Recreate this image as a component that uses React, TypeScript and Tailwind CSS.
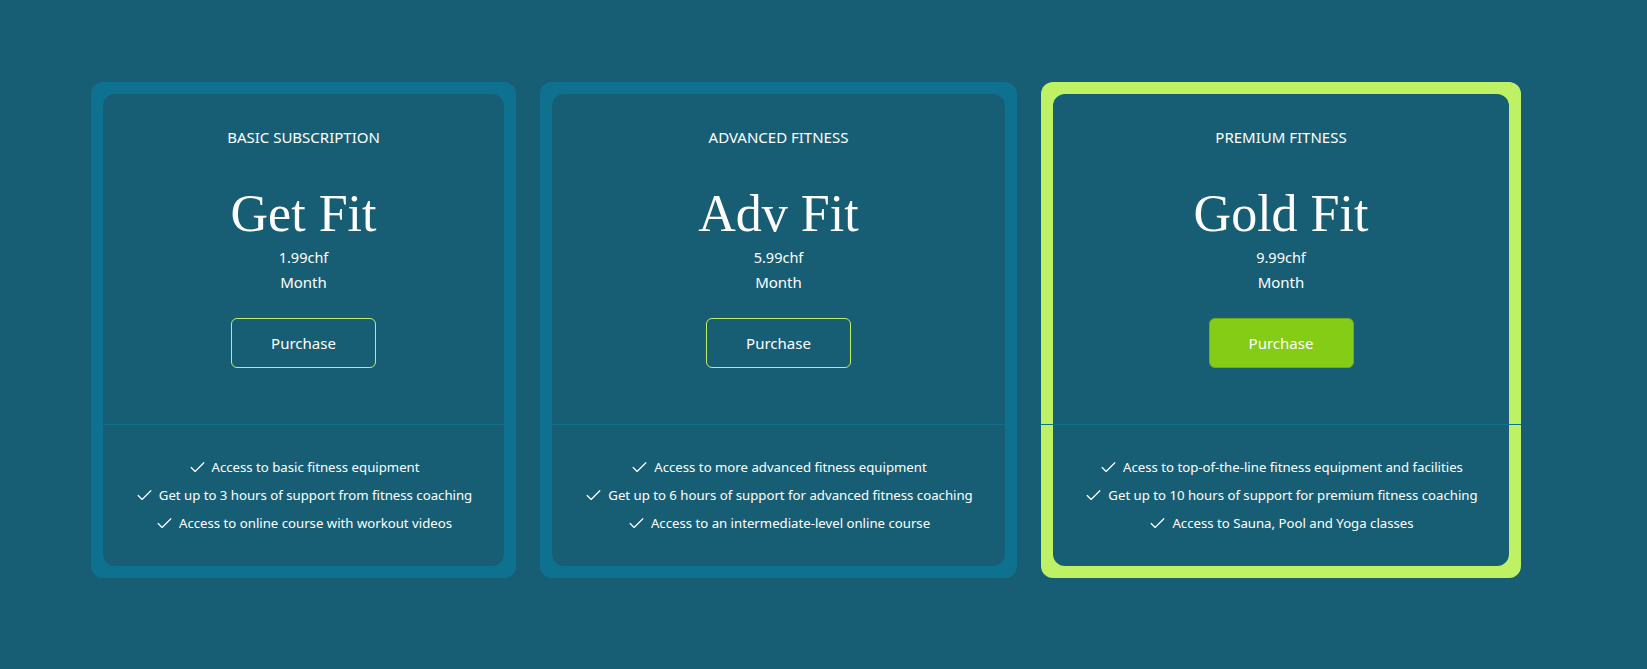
import React from 'react'
import { Check } from 'lucide-react'

type Plan = {
  tag: string
  name: string
  price: string
  features: string[]
  width: string
  featured?: boolean
}

const plans: Plan[] = [
  {
    tag: 'BASIC SUBSCRIPTION',
    name: 'Get Fit',
    price: '1.99chf',
    width: 'w-[425px]',
    features: [
      'Access to basic fitness equipment',
      'Get up to 3 hours of support from fitness coaching',
      'Access to online course with workout videos',
    ],
  },
  {
    tag: 'ADVANCED FITNESS',
    name: 'Adv Fit',
    price: '5.99chf',
    width: 'w-[477px]',
    features: [
      'Access to more advanced fitness equipment',
      'Get up to 6 hours of support for advanced fitness coaching',
      'Access to an intermediate-level online course',
    ],
  },
  {
    tag: 'PREMIUM FITNESS',
    name: 'Gold Fit',
    price: '9.99chf',
    width: 'w-[480px]',
    featured: true,
    features: [
      'Acess to top-of-the-line fitness equipment and facilities',
      'Get up to 10 hours of support for premium fitness coaching',
      'Access to Sauna, Pool and Yoga classes',
    ],
  },
]

function PlanCard({ plan }: { plan: Plan }) {
  const outer = plan.featured ? 'bg-[#bef264]' : 'bg-[#0e7190]'
  return (
    <div className={`${plan.width} ${outer} flex flex-col rounded-[12px] p-[12px]`}>
      <div className="flex flex-1 flex-col rounded-[12px] bg-[#175e75]">
        <div className="flex flex-col items-center pt-[33px] pb-[56px]">
          <div className="text-[15px] leading-[20px]">{plan.tag}</div>
          <h2 className="mt-[41px] font-['Liberation_Serif',serif] text-[52px] leading-[52px]">{plan.name}</h2>
          <div className="mt-[5px] text-[14.5px] leading-[25px]">{plan.price}</div>
          <div className="text-[15px] leading-[25px]">Month</div>
          {plan.featured ? (
            <button className="mt-[23px] h-[50px] w-[145px] rounded-[6px] border border-[#6fae12] bg-[#84cc16] text-[15px]">
              Purchase
            </button>
          ) : (
            <button className="mt-[23px] h-[50px] w-[145px] rounded-[6px] border border-[#bef264] text-[15px]">
              Purchase
            </button>
          )}
        </div>
        <div className="-mx-[12px] h-px bg-[#0e7190]" />
        <ul className="flex flex-col items-center pt-[28px] pb-[29px] text-[13.2px] leading-[28px]">
          {plan.features.map((f) => (
            <li key={f} className="flex items-center gap-[5px]">
              <Check size={19} strokeWidth={1.5} />
              <span>{f}</span>
            </li>
          ))}
        </ul>
      </div>
    </div>
  )
}

export default function App() {
  return (
    <div className="min-h-screen bg-[#175e75] font-['Noto_Sans',sans-serif] text-white">
      <div className="flex gap-[24px] pl-[91px] pt-[82px]">
        {plans.map((p) => (
          <PlanCard key={p.name} plan={p} />
        ))}
      </div>
    </div>
  )
}
